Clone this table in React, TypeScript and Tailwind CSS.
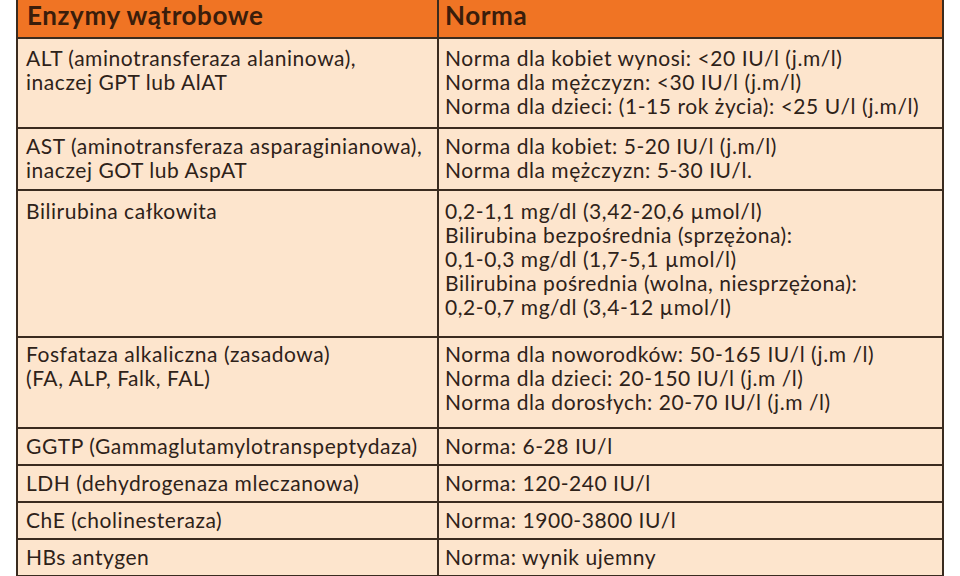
import React from 'react';

interface Row {
  name: string[];
  norm: string[];
  height: string;
  pad: string;
}

const rows: Row[] = [
  {
    name: ['ALT (aminotransferaza alaninowa),', 'inaczej GPT lub AlAT'],
    norm: [
      'Norma dla kobiet wynosi: <20 IU/l (j.m/l)',
      'Norma dla mężczyzn: <30 IU/l (j.m/l)',
      'Norma dla dzieci: (1-15 rok życia): <25 U/l (j.m/l)',
    ],
    height: 'h-[90px]',
    pad: 'pt-[7px]',
  },
  {
    name: ['AST (aminotransferaza asparaginianowa),', 'inaczej GOT lub AspAT'],
    norm: ['Norma dla kobiet: 5-20 IU/l (j.m/l)', 'Norma dla mężczyzn: 5-30 IU/l.'],
    height: 'h-[62px]',
    pad: 'pt-[5px]',
  },
  {
    name: ['Bilirubina całkowita'],
    norm: [
      '0,2-1,1 mg/dl (3,42-20,6 µmol/l)',
      'Bilirubina bezpośrednia (sprzężona):',
      '0,1-0,3 mg/dl (1,7-5,1 µmol/l)',
      'Bilirubina pośrednia (wolna, niesprzężona):',
      '0,2-0,7 mg/dl (3,4-12 µmol/l)',
    ],
    height: 'h-[147px]',
    pad: 'pt-[8px]',
  },
  {
    name: ['Fosfataza alkaliczna (zasadowa)', '(FA, ALP, Falk, FAL)'],
    norm: [
      'Norma dla noworodków: 50-165 IU/l (j.m /l)',
      'Norma dla dzieci: 20-150 IU/l (j.m /l)',
      'Norma dla dorosłych: 20-70 IU/l (j.m /l)',
    ],
    height: 'h-[91px]',
    pad: 'pt-[4px]',
  },
  {
    name: ['GGTP (Gammaglutamylotranspeptydaza)'],
    norm: ['Norma: 6-28 IU/l'],
    height: 'h-[37px]',
    pad: 'pt-[5px]',
  },
  {
    name: ['LDH (dehydrogenaza mleczanowa)'],
    norm: ['Norma: 120-240 IU/l'],
    height: 'h-[37px]',
    pad: 'pt-[5px]',
  },
  {
    name: ['ChE (cholinesteraza)'],
    norm: ['Norma: 1900-3800 IU/l'],
    height: 'h-[37px]',
    pad: 'pt-[5px]',
  },
  {
    name: ['HBs antygen'],
    norm: ['Norma: wynik ujemny'],
    height: 'h-[37px]',
    pad: 'pt-[5px]',
  },
];

export default function App() {
  return (
    <div className="w-[960px] h-[576px] overflow-hidden bg-white font-['Lato','Liberation_Sans',sans-serif] text-[#2e2219]">
      <div className="ml-[16px] w-[928px] border-x-2 border-[#3a2b1f]">
        {/* header */}
        <div className="grid grid-cols-[421px_1fr] h-[39px] border-b-2 border-[#3a2b1f] bg-[#f07424] text-[26px] tracking-[0.6px] font-bold text-[#3a1d0b] leading-[31px]">
          <div className="border-r-2 border-[#3a2b1f] px-[9px]">Enzymy wątrobowe</div>
          <div className="pl-[6px]">Norma</div>
        </div>

        {rows.map((r, i) => (
          <div
            key={i}
            className={`grid grid-cols-[421px_1fr] border-b-2 border-[#3a2b1f] bg-[#fde5cd] text-[21px] tracking-[0.55px] leading-[24px] ${r.height}`}
          >
            <div className={`border-r-2 border-[#3a2b1f] px-[8px] ${r.pad}`}>
              {r.name.map((t, j) => (
                <div key={j} className="whitespace-nowrap">{t}</div>
              ))}
            </div>
            <div className={`pl-[6px] ${r.pad}`}>
              {r.norm.map((t, j) => (
                <div key={j} className="whitespace-nowrap">{t}</div>
              ))}
            </div>
          </div>
        ))}
      </div>
    </div>
  );
}
